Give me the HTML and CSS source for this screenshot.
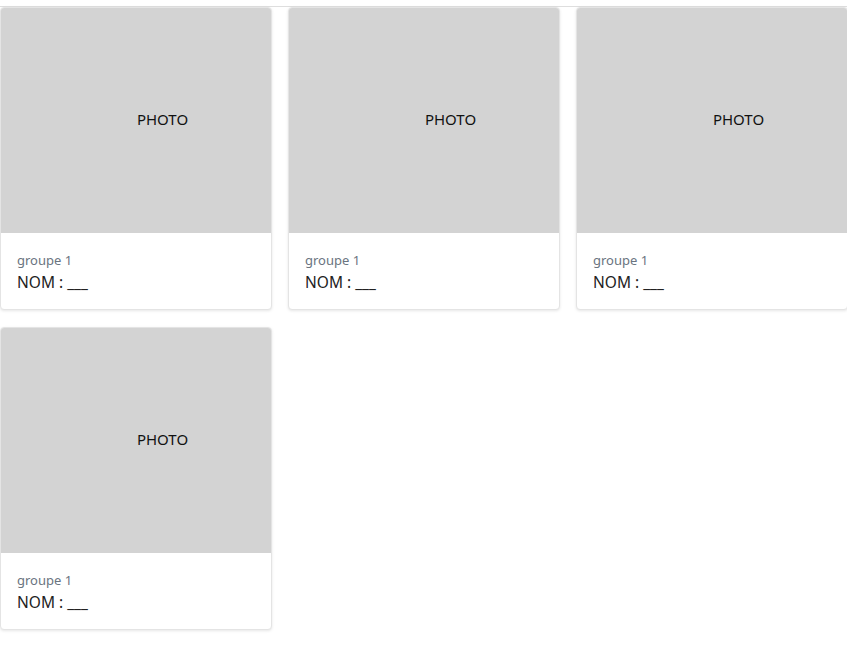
FILE: index.html
```html
<!DOCTYPE html>
<html>
<head>
<meta charset="utf-8">
<link rel="stylesheet" href="styles.css">
</head>
<body>
<div class="page">
  <div class="grid">
    <div class="card">
      <div class="photo"><span>PHOTO</span></div>
      <div class="info">
        <div class="group">groupe 1</div>
        <div class="name">NOM : ___</div>
      </div>
    </div>
    <div class="card">
      <div class="photo"><span>PHOTO</span></div>
      <div class="info">
        <div class="group">groupe 1</div>
        <div class="name">NOM : ___</div>
      </div>
    </div>
    <div class="card">
      <div class="photo"><span>PHOTO</span></div>
      <div class="info">
        <div class="group">groupe 1</div>
        <div class="name">NOM : ___</div>
      </div>
    </div>
    <div class="card">
      <div class="photo"><span>PHOTO</span></div>
      <div class="info">
        <div class="group">groupe 1</div>
        <div class="name">NOM : ___</div>
      </div>
    </div>
  </div>
</div>
</body>
</html>
```
FILE: styles.css
```css
html, body {
  margin: 0;
  padding: 0;
  background: #fff;
  font-family: "Noto Sans", "Open Sans", sans-serif;
}
.page {
  padding-top: 6px;
  padding-bottom: 10px;
  width: 847px;
  overflow: hidden;
}
.grid {
  border-top: 1px solid #dedede;
  display: grid;
  grid-template-columns: repeat(3, 272px);
  column-gap: 16px;
  row-gap: 17px;
  width: 900px;
}
.card {
  box-sizing: border-box;
  background: #fff;
  border: 1px solid #e4e4e4;
  border-radius: 4px;
  box-shadow: 0 1px 3px rgba(0,0,0,0.10);
  overflow: hidden;
  height: 303px;
}
.photo {
  height: 225px;
  background: #d3d3d3;
  display: flex;
  align-items: center;
  justify-content: center;
  padding-left: 53px;
  padding-bottom: 3px;
  box-sizing: border-box;
  color: #111;
  font-size: 15px;
}
.info {
  padding: 19px 16px 0 16px;
}
.group {
  font-size: 13px;
  color: #6a7480;
  line-height: 16px;
}
.name {
  font-size: 15.5px;
  color: #222;
  line-height: 22px;
  margin-top: 3px;
}
```
